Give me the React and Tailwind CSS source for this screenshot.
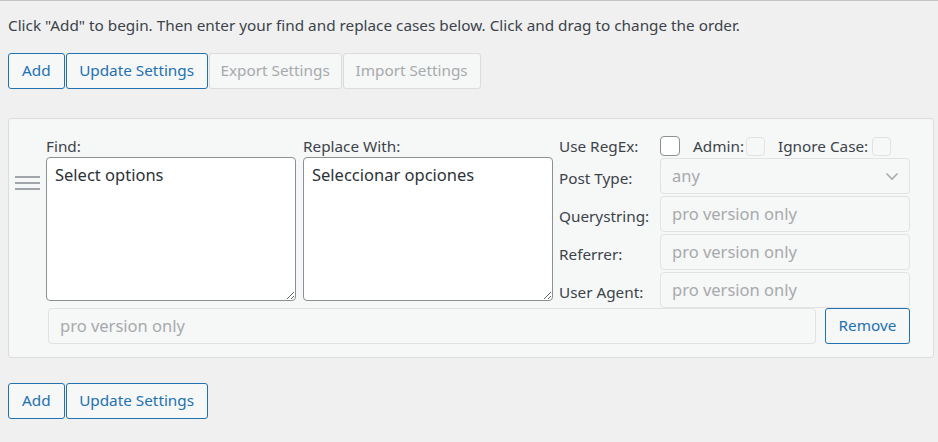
import React from "react";

const font = { fontFamily: '"Noto Sans", "Open Sans", Arial, sans-serif' };

function Btn({ children, disabled, className = "px-[13px]" }) {
  return (
    <button
      type="button"
      className={
        "h-[36px] rounded-[3px] border text-[15.3px] leading-none bg-[#f6f7f7] " +
        (disabled
          ? "border-[#dcdcde] text-[#a7aaad] "
          : "border-[#2271b1] text-[#2271b1] ") +
        className
      }
    >
      {children}
    </button>
  );
}

function Box({ disabled }) {
  return (
    <span
      className={
        "inline-block shrink-0 rounded-[4px] border " +
        (disabled
          ? "w-[19px] h-[19px] border-[#e2e2e4] bg-[#f6f7f7]"
          : "w-[20px] h-[20px] border-[#8c8f94] bg-white")
      }
    />
  );
}

function DisInput({ text, chevron }) {
  return (
    <div className="relative flex h-[36px] w-[250px] items-center rounded-[4px] border border-[#e2e2e4] bg-[#f6f7f7] pl-[11px] text-[16.5px] text-[#a7aaad]">
      {text}
      {chevron && (
        <svg
          className="absolute right-[10px] top-[12px]"
          width="14"
          height="10"
          viewBox="0 0 14 10"
          fill="none"
          stroke="#a7aaad"
          strokeWidth="1.6"
        >
          <path d="M1.5 2.5 L7 8 L12.5 2.5" />
        </svg>
      )}
    </div>
  );
}

function Row({ label, children }) {
  return (
    <div className="flex h-[36px] items-center">
      <div className="w-[101px] pt-[4px] text-[15.3px] text-[#3c434a]">{label}</div>
      {children}
    </div>
  );
}

function TA({ value }) {
  return (
    <textarea
      readOnly
      defaultValue={value}
      className="block h-[144px] w-[250px] resize-y rounded-[4px] border border-[#8c8f94] bg-white px-[8px] pt-[5px] text-[16.5px] leading-[24px] text-[#2c3338] outline-none"
    />
  );
}

export default function App() {
  return (
    <div
      style={font}
      className="h-[442px] w-[938px] overflow-hidden border-t border-[#c3c4c7] bg-[#f0f0f1] px-[8px]"
    >
      <p className="whitespace-nowrap pt-[13px] text-[15.3px] leading-[22px] text-[#3c434a]">
        Click "Add" to begin. Then enter your find and replace cases below. Click and drag to change the order.
      </p>
      <div className="mt-[17px] flex gap-[1px]">
        <Btn>Add</Btn>
        <Btn className="w-[142px]">Update Settings</Btn>
        <Btn disabled className="w-[133px]">Export Settings</Btn>
        <Btn disabled className="w-[138px]">Import Settings</Btn>
      </div>

      <div className="mt-[29px] w-[926px] rounded-[3px] border border-[#dcdcde] bg-[#f6f7f7]">
        <div className="flex pt-[17px]">
          <div className="w-[37px] pl-[6px] pt-[40px]">
            <div className="flex w-[25px] flex-col gap-[4px]">
              <span className="block h-[2px] bg-[#a0a5aa]" />
              <span className="block h-[2px] bg-[#a0a5aa]" />
              <span className="block h-[2px] bg-[#a0a5aa]" />
            </div>
          </div>
          <div className="w-[250px]">
            <div className="h-[21px] text-[15.3px] leading-[21px] text-[#3c434a]">Find:</div>
            <TA value="Select options" />
          </div>
          <div className="ml-[7px] w-[250px]">
            <div className="h-[21px] text-[15.3px] leading-[21px] text-[#3c434a]">Replace With:</div>
            <TA value="Seleccionar opciones" />
          </div>
          <div className="ml-[6px] flex w-[351px] flex-col gap-[2px]">
            <div className="flex h-[20px] items-center whitespace-nowrap text-[15.3px] text-[#3c434a]">
              <span className="w-[101px]">Use RegEx:</span>
              <Box />
              <span className="ml-[13px] w-[53px]">Admin:</span>
              <Box disabled />
              <span className="ml-[13px] w-[94px]">Ignore Case:</span>
              <Box disabled />
            </div>
            <Row label="Post Type:">
              <DisInput text="any" chevron />
            </Row>
            <Row label="Querystring:">
              <DisInput text="pro version only" />
            </Row>
            <Row label="Referrer:">
              <DisInput text="pro version only" />
            </Row>
            <Row label="User Agent:">
              <DisInput text="pro version only" />
            </Row>
          </div>
        </div>
        <div className="flex pb-[13px] pl-[39px]">
          <div className="flex h-[36px] w-[768px] items-center rounded-[4px] border border-[#e2e2e4] bg-[#f6f7f7] pl-[11px] text-[16.5px] text-[#a7aaad]">
            pro version only
          </div>
          <Btn className="ml-[9px] w-[85px] px-0">Remove</Btn>
        </div>
      </div>

      <div className="mt-[25px] flex gap-[1px]">
        <Btn>Add</Btn>
        <Btn className="w-[142px]">Update Settings</Btn>
      </div>
    </div>
  );
}
